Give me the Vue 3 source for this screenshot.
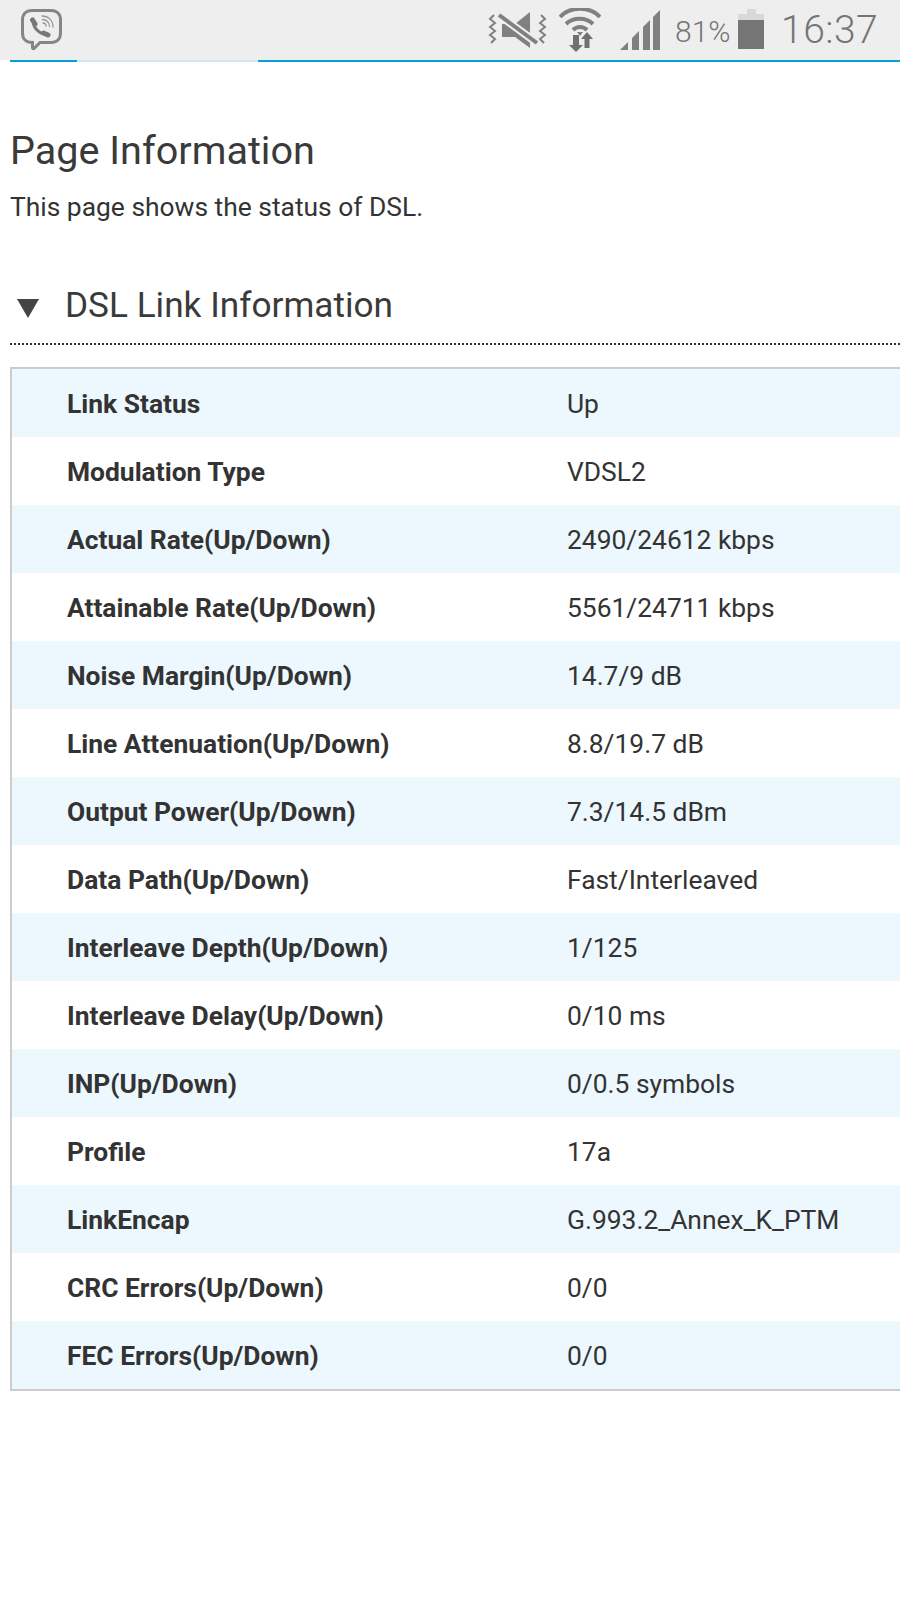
<script setup>
const rows = [
  ['Link Status', 'Up'],
  ['Modulation Type', 'VDSL2'],
  ['Actual Rate(Up/Down)', '2490/24612 kbps'],
  ['Attainable Rate(Up/Down)', '5561/24711 kbps'],
  ['Noise Margin(Up/Down)', '14.7/9 dB'],
  ['Line Attenuation(Up/Down)', '8.8/19.7 dB'],
  ['Output Power(Up/Down)', '7.3/14.5 dBm'],
  ['Data Path(Up/Down)', 'Fast/Interleaved'],
  ['Interleave Depth(Up/Down)', '1/125'],
  ['Interleave Delay(Up/Down)', '0/10 ms'],
  ['INP(Up/Down)', '0/0.5 symbols'],
  ['Profile', '17a'],
  ['LinkEncap', 'G.993.2_Annex_K_PTM'],
  ['CRC Errors(Up/Down)', '0/0'],
  ['FEC Errors(Up/Down)', '0/0'],
]
</script>

<template>
  <div class="screen">
    <header class="status">
      <svg class="viber" width="44" height="44" viewBox="0 0 44 44" fill="none" stroke="#858585" stroke-linecap="round">
        <path d="M12 2.500h19c6 0 9.500 3.500 9.500 9.500v13c0 6-3.500 9.500-9.500 9.500H20l-6 6c-1 .5-1.500 0-1.500-1v-5H12c-6 0-9.500-3.500-9.500-9.500V12c0-6 3.500-9.500 9.500-9.500z" stroke-width="3"/>
        <path d="M13.500 13c-1 6 6 13.500 13 13" stroke="#777" stroke-width="3"/>
        <path d="M12.500 12l2.500 4M23.500 25l4.500 2" stroke="#777" stroke-width="5"/>
        <path d="M22 8c6 0 11 4 11 11M22.500 11.500c4 0 7 3 7 7M23 15c2 0 3 1.500 3 3" stroke="#999" stroke-width="1.300"/>
      </svg>
      <div class="tray">
        <svg class="mute" width="60" height="36" viewBox="0 0 60 36" fill="none" stroke="#808080">
          <path d="M6 3L2 7l5 4-5 4 5 4-5 4 5 4-4 4" stroke-width="2"/>
          <path d="M53 3l4 4-5 4 5 4-5 4 5 4-5 4 4 4" stroke-width="2"/>
          <path d="M14 12h13L42 0v36L27 25H14z" fill="#808080" stroke="none"/>
          <path d="M11 3l38 28" stroke="#eeeeee" stroke-width="8"/>
          <path d="M11 3l38 28" stroke-width="4"/>
        </svg>
        <svg class="wifi" width="42" height="44" viewBox="0 0 42 44" fill="none" stroke="#808080">
          <path d="M1 9c10-11 30-11 40 0" stroke-width="4"/>
          <path d="M7 16c7-7 20-7 27 0" stroke-width="4"/>
          <path d="M14 22c4-4 10-4 14 0" stroke-width="4"/>
          <path d="M18 24h6l-3 4z" fill="#808080" stroke="none"/>
          <path d="M14 27h6v10h4l-7 7-7-7h4z" fill="#707070" stroke="none"/>
          <path d="M28 24l6 7h-3.500v9h-5v-9H22z" fill="#707070" stroke="none"/>
        </svg>
        <svg class="signal" width="40" height="40" viewBox="0 0 40 40" fill="#808080">
          <path d="M0 40l8-8v8z"/>
          <path d="M12 28l7-7v19h-7z"/>
          <path d="M23 17l7-7v30h-7z"/>
          <path d="M33 7l7-7v40h-7z"/>
        </svg>
        <span class="pct">81%</span>
        <svg class="battery" width="26" height="40" viewBox="0 0 26 40">
          <path d="M9 0h9v5h8v35H0V5h9z" fill="#d8d8d8"/>
          <path d="M0 11h26v29H0z" fill="#757575"/>
        </svg>
        <span class="time">16:37</span>
      </div>
    </header>
    <div class="loading">
      <span class="seg"></span>
      <span class="seg faint"></span>
      <span class="seg rest"></span>
    </div>

    <main class="page">
      <h1 class="title">Page Information</h1>
      <p class="desc">This page shows the status of DSL.</p>

      <div class="section">
        <span class="arrow"></span>
        <h2 class="section-title">DSL Link Information</h2>
      </div>

      <div class="table">
        <div v-for="(row, i) in rows" :key="row[0]" class="row" :class="{ odd: i % 2 === 0 }">
          <span class="label">{{ row[0] }}</span>
          <span class="value">{{ row[1] }}</span>
        </div>
      </div>
    </main>
  </div>
</template>

<style scoped>
.screen {
  width: 900px;
  height: 1600px;
  background: #fff;
  font-family: Roboto, "Liberation Sans", sans-serif;
  color: #333;
  overflow: hidden;
}
.status {
  height: 60px;
  background: #eeeeee;
  display: flex;
  align-items: flex-start;
  justify-content: space-between;
  padding: 0 22px 0 20px;
  box-sizing: border-box;
}
.viber { margin-top: 8px; }
.tray { display: flex; align-items: flex-start; color: #757575; }
.mute { margin-top: 12px; margin-right: 11px; }
.wifi { margin-top: 8px; margin-right: 19px; }
.signal { margin-top: 10px; margin-right: 15px; }
.pct {
  font-size: 30px;
  font-weight: 300;
  line-height: 36px;
  margin-top: 14px;
  margin-right: 9px;
  width: 54px;
  white-space: nowrap;
}
.battery { margin-top: 9px; margin-right: 17px; }
.time {
  font-size: 39px;
  font-weight: 300;
  line-height: 46px;
  letter-spacing: 0.5px;
  margin-top: 7px;
  width: 97px;
  white-space: nowrap;
}

.loading { display: flex; height: 2px; padding-left: 10px; }
.seg { width: 67px; background: #0a9ed6; }
.seg.faint { width: 181px; background: #cde9f6; }
.seg.rest { flex: 1; }

.page { padding: 0 0 0 10px; }
.title {
  margin: 67px 0 0;
  font-size: 39.600px;
  font-weight: 400;
  line-height: 44px;
  color: #3a3a3a;
}
.desc {
  margin: 18px 0 0;
  font-size: 26.400px;
  line-height: 32px;
}
.section {
  display: flex;
  align-items: center;
  margin-top: 50px;
  height: 64px;
  border-bottom: 2px dotted #333;
  padding-bottom: 6px;
  box-sizing: content-box;
}
.arrow {
  width: 0;
  height: 0;
  border-left: 11px solid transparent;
  border-right: 11px solid transparent;
  border-top: 19px solid #444;
  margin-left: 7px;
  margin-top: 6px;
}
.section-title {
  margin: 0 0 0 26px;
  font-size: 35.200px;
  font-weight: 400;
  line-height: 44px;
  color: #3a3a3a;
}
.table {
  margin-top: 22px;
  border: 2px solid #ccc;
  border-right: 0;
}
.row {
  display: flex;
  align-items: center;
  height: 68px;
  padding-top: 2px;
  box-sizing: border-box;
  font-size: 26.400px;
}
.row.odd { background: #edf7fe; }
.label { width: 500px; margin-left: 55px; font-weight: 700; }
.value { flex: 1; }
</style>
